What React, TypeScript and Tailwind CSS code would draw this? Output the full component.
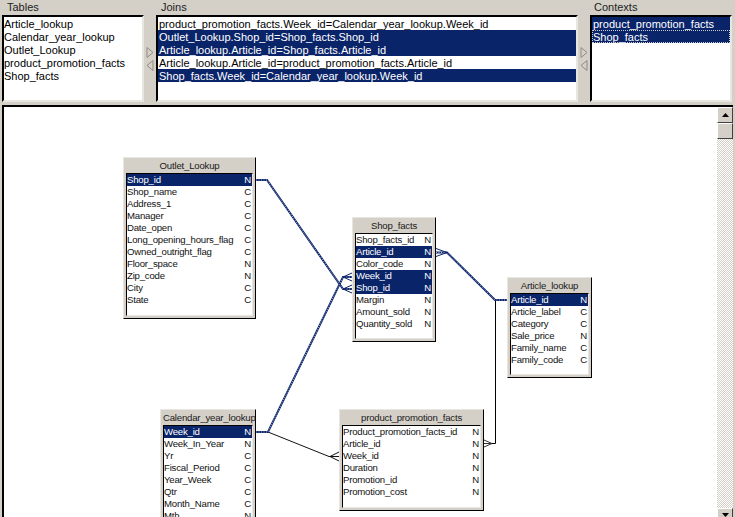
const navy = 'bg-[#0a246a] text-white'

const tables = ['Article_lookup', 'Calendar_year_lookup', 'Outlet_Lookup', 'product_promotion_facts', 'Shop_facts']
const joins = [
  { text: 'product_promotion_facts.Week_id=Calendar_year_lookup.Week_id', on: false },
  { text: 'Outlet_Lookup.Shop_id=Shop_facts.Shop_id', on: true },
  { text: 'Article_lookup.Article_id=Shop_facts.Article_id', on: true },
  { text: 'Article_lookup.Article_id=product_promotion_facts.Article_id', on: false },
  { text: 'Shop_facts.Week_id=Calendar_year_lookup.Week_id', on: true },
]

type Col = [string, string, boolean?]

const outlet: Col[] = [
  ['Shop_id', 'N', true], ['Shop_name', 'C'], ['Address_1', 'C'], ['Manager', 'C'], ['Date_open', 'C'],
  ['Long_opening_hours_flag', 'C'], ['Owned_outright_flag', 'C'], ['Floor_space', 'N'], ['Zip_code', 'N'], ['City', 'C'], ['State', 'C'],
]
const shop: Col[] = [
  ['Shop_facts_id', 'N'], ['Article_id', 'N', true], ['Color_code', 'N'], ['Week_id', 'N', true], ['Shop_id', 'N', true],
  ['Margin', 'N'], ['Amount_sold', 'N'], ['Quantity_sold', 'N'],
]
const article: Col[] = [
  ['Article_id', 'N', true], ['Article_label', 'C'], ['Category', 'C'], ['Sale_price', 'N'], ['Family_name', 'C'], ['Family_code', 'C'],
]
const calendar: Col[] = [
  ['Week_id', 'N', true], ['Week_In_Year', 'N'], ['Yr', 'C'], ['Fiscal_Period', 'C'], ['Year_Week', 'C'], ['Qtr', 'C'], ['Month_Name', 'C'], ['Mth', 'N'],
]
const promo: Col[] = [
  ['Product_promotion_facts_id', 'N'], ['Article_id', 'N'], ['Week_id', 'N'], ['Duration', 'N'], ['Promotion_id', 'N'], ['Promotion_cost', 'N'],
]

function ListBox({ className, children }: { className: string; children: React.ReactNode }) {
  return (
    <div className={`h-[87px] bg-white border-2 border-t-black border-l-black border-r-[#e8e6e1] border-b-[#e8e6e1] overflow-hidden ${className}`}>
      {children}
    </div>
  )
}

function Arrows({ flip }: { flip?: boolean }) {
  return (
    <svg width="8" height="24" viewBox="0 0 8 24" className={`mt-[32px] ${flip ? 'rotate-180' : ''}`}>
      <path d="M1 .5 7 5.5 1 10.5Z" fill="#d4d0c8" stroke="#8f8c85" />
      <path d="M7 13.5 1 18.5 7 23.5Z" fill="#d4d0c8" stroke="#8f8c85" />
    </svg>
  )
}

// one table window on the diagram canvas
function TableNode({ title, cols, className }: { title: string; cols: Col[]; className: string }) {
  return (
    <div className={`absolute bg-[#d4d0c8] border border-t-[#e8e6e1] border-l-[#e8e6e1] border-r-black border-b-black p-0.5 pt-0 flex flex-col text-[9.6px] tracking-[-0.2px] ${className}`}>
      <div className="h-[15px] shrink-0 text-center leading-[15px] text-[#1a1a1a] whitespace-nowrap">{title}</div>
      <div className="flex-1 bg-white border border-l-black border-t-black border-r-[#e8e6e1] border-b-[#e8e6e1]">
        {cols.map(([name, type, on]) => (
          <div key={name} className={`h-3 flex justify-between pr-px leading-3 whitespace-nowrap ${on ? navy : 'text-[#111]'}`}>
            <span>{name}</span>
            <span>{type}</span>
          </div>
        ))}
      </div>
    </div>
  )
}

function JoinLine({ d }: { d: string }) {
  return (
    <>
      <path d={d} fill="none" stroke="#0a246a" strokeWidth="2" />
      <path d={d} fill="none" stroke="#fff" strokeWidth="0.7" strokeDasharray="1 1.5" />
    </>
  )
}

export default function App() {
  return (
    <div className="w-[735px] h-[517px] overflow-hidden bg-[#d4d0c8] text-[11px] text-black font-['Liberation_Sans',Arial,sans-serif] flex flex-col">
      <div className="h-[105px] shrink-0 flex items-start pl-0.5">
        <div className="w-[142px] shrink-0">
          <div className="h-[15px] pl-[5px] leading-[15px] text-[#222]">Tables</div>
          <ListBox className="w-[142px]">
            {tables.map(t => <div key={t} className="h-[13px] leading-[15px] whitespace-nowrap">{t}</div>)}
          </ListBox>
        </div>
        <div className="w-[12px] shrink-0 flex justify-center pt-[15px]"><Arrows /></div>
        <div className="w-[422px] shrink-0">
          <div className="h-[15px] pl-[5px] leading-[15px] text-[#222]">Joins</div>
          <ListBox className="w-[422px]">
            {joins.map(j => (
              <div key={j.text} className={`h-[13px] pl-px leading-[15px] whitespace-nowrap ${j.on ? navy : ''}`}>{j.text}</div>
            ))}
          </ListBox>
        </div>
        <div className="w-[12px] shrink-0 flex justify-center pt-[15px]"><Arrows flip /></div>
        <div className="w-[142px] shrink-0">
          <div className="h-[15px] pl-[4px] leading-[15px] text-[#222]">Contexts</div>
          <ListBox className="w-[142px]">
            <div className={`h-[13px] pl-px leading-[15px] ${navy}`}>product_promotion_facts</div>
            <div className={`h-[13px] pl-px leading-[15px] outline-1 -outline-offset-1 outline-dotted outline-[#c9c9c9] ${navy}`}>Shop_facts</div>
          </ListBox>
        </div>
      </div>

      <div className="ml-0.5 w-[731px] flex-1 flex bg-white border-l-2 border-t-2 border-black overflow-hidden">
        <div className="relative flex-1 overflow-hidden">
          <svg width="713" height="410" viewBox="4 107 713 410" className="absolute left-0 top-0">
            <path d="M495.5 300V443.5H486" fill="none" stroke="#000" />
            <path d="M268 432 329 456.5H339" fill="none" stroke="#111" />
            <path d="M330 456.5 339 452M330 456.5 339 461" fill="none" stroke="#111" />
            <path d="M492 443.5 484 440M492 443.5 484 443.5M492 443.5 484 447" fill="none" stroke="#333" />
            <JoinLine d="M256 180H267L343 289H352" />
            <JoinLine d="M256 432H268L343 277H352" />
            <JoinLine d="M436 252.5H447L495 300H507" />
            <path d="M343 277 352 273M343 277 352 281M343 289 352 285M343 289 352 293M447 252.5 436 248.5M447 252.5 436 256.5" fill="none" stroke="#0a246a" />
          </svg>
          <TableNode title="Outlet_Lookup" cols={outlet} className="left-[119px] top-[50px] w-[133px] h-[162px]" />
          <TableNode title="Shop_facts" cols={shop} className="left-[348px] top-[110px] w-[84px] h-[125px]" />
          <TableNode title="Article_lookup" cols={article} className="left-[503px] top-[170px] w-[85px] h-[101px]" />
          <TableNode title="Calendar_year_lookup" cols={calendar} className="left-[156px] top-[302px] w-[96px] h-[130px]" />
          <TableNode title="product_promotion_facts" cols={promo} className="left-[335px] top-[302px] w-[145px] h-[102px]" />
        </div>
        <div className="w-[16px] shrink-0 flex flex-col bg-[repeating-conic-gradient(#d4d0c8_0%_25%,#fff_0%_50%)] bg-[length:2px_2px]">
          <div className="h-[16px] shrink-0 bg-[#d4d0c8] border border-t-white border-l-white border-r-[#404040] border-b-[#404040] flex items-center justify-center">
            <svg width="7" height="4" viewBox="0 0 7 4"><path d="M3.5 0 7 4H0Z" fill="#000" /></svg>
          </div>
          <div className="h-[16px] shrink-0 bg-[#d4d0c8] border border-t-white border-l-white border-r-[#404040] border-b-[#404040]" />
          <div className="flex-1" />
          <div className="h-[9px] shrink-0 bg-[#d4d0c8] border-t border-l border-r border-t-white border-l-white border-r-[#404040] flex items-start justify-center pt-1">
            <svg width="7" height="4" viewBox="0 0 7 4"><path d="M0 0H7L3.5 4Z" fill="#000" /></svg>
          </div>
        </div>
      </div>
    </div>
  )
}
